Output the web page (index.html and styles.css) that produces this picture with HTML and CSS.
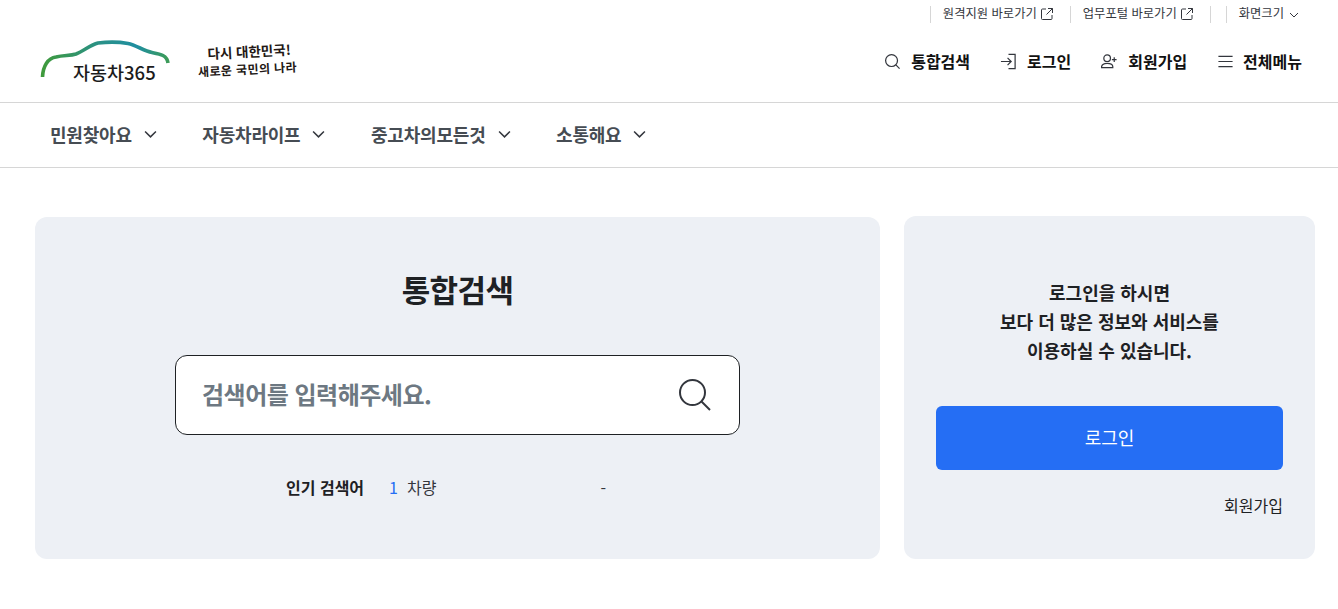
FILE: index.html
```html
<!DOCTYPE html>
<html lang="ko">
<head>
<meta charset="utf-8">
<title>자동차365</title>
<link rel="stylesheet" href="styles.css">
</head>
<body>
<header class="header">
  <div class="util">
    <a class="util-link"><span>원격지원 바로가기</span><svg class="ext" viewBox="0 0 14 14"><path d="M6 2H2.500A1 1 0 0 0 1.500 3v8.500a1 1 0 0 0 1 1H11a1 1 0 0 0 1-1V8M8 1.500h4.500V6M12.500 1.500L6.500 7.500"/></svg></a>
    <a class="util-link"><span>업무포털 바로가기</span><svg class="ext" viewBox="0 0 14 14"><path d="M6 2H2.500A1 1 0 0 0 1.500 3v8.500a1 1 0 0 0 1 1H11a1 1 0 0 0 1-1V8M8 1.500h4.500V6M12.500 1.500L6.500 7.500"/></svg></a>
    <span class="util-empty"></span>
    <a class="util-size"><span>화면크기</span><svg class="util-chev" viewBox="0 0 10 6"><path d="M1 1l4 4 4-4"/></svg></a>
  </div>
  <div class="brand-row">
    <div class="brand">
      <div class="logo">
        <svg class="logo-car" viewBox="0 0 130 46">
          <defs><linearGradient id="car" x1="0" x2="1" y1="0" y2="0"><stop offset="0" stop-color="#3f9a3c"/><stop offset=".45" stop-color="#2a9187"/><stop offset=".75" stop-color="#1f8ea0"/><stop offset="1" stop-color="#3c9b58"/></linearGradient></defs>
          <path d="M2.500 43C3 32 8 24 16 23C24 21 30 22 36 20C44 17 50 11 58 9C66 8 80 8 88 9.500C96 11 104 17 112 18.500C120 20 127 21 128 29" fill="none" stroke="url(#car)" stroke-width="3.600"/>
        </svg>
        <span class="logo-text">자동차365</span>
      </div>
      <div class="slogan"><span class="slogan-a">다시 대한민국!</span><span class="slogan-b">새로운 국민의 나라</span></div>
    </div>
    <nav class="quick">
      <a class="quick-item"><svg class="qi" viewBox="0 0 18 18"><circle cx="8" cy="8" r="6.300"/><path d="M12.600 12.600L16.500 16.500"/></svg>통합검색</a>
      <a class="quick-item"><svg class="qi" viewBox="0 0 18 18"><path d="M1 9h10.500M8 5.200L11.800 9 8 12.800M9 1.500h7v15H9"/></svg>로그인</a>
      <a class="quick-item"><svg class="qi" viewBox="0 0 18 18"><circle cx="6.500" cy="5.500" r="3.500"/><path d="M.500 15.500c0-3 2.500-4.500 6-4.500s6 1.500 6 3.500v1zM14 4.500v5M11.500 7h5"/></svg>회원가입</a>
      <a class="quick-item"><svg class="qi" viewBox="0 0 18 18"><path d="M1.500 3.500h15M1.500 9h15M1.500 14.500h15"/></svg>전체메뉴</a>
    </nav>
  </div>
</header>
<nav class="gnb">
  <a class="gnb-item">민원찾아요<svg class="gnb-chev" viewBox="0 0 12 8"><path d="M1 1.200l5 5 5-5"/></svg></a>
  <a class="gnb-item">자동차라이프<svg class="gnb-chev" viewBox="0 0 12 8"><path d="M1 1.200l5 5 5-5"/></svg></a>
  <a class="gnb-item">중고차의모든것<svg class="gnb-chev" viewBox="0 0 12 8"><path d="M1 1.200l5 5 5-5"/></svg></a>
  <a class="gnb-item">소통해요<svg class="gnb-chev" viewBox="0 0 12 8"><path d="M1 1.200l5 5 5-5"/></svg></a>
</nav>
<main class="main">
  <section class="card search-card">
    <h1 class="search-title">통합검색</h1>
    <div class="search-box">
      <span class="search-ph">검색어를 입력해주세요.</span>
      <svg class="search-icon" viewBox="0 0 32 32"><circle cx="13.500" cy="13.500" r="12.500"/><path d="M22.500 22.500L31 31"/></svg>
    </div>
    <div class="popular">
      <strong class="popular-label">인기 검색어</strong>
      <span class="popular-num">1</span>
      <span class="popular-word">차량</span>
      <span class="popular-dash">-</span>
    </div>
  </section>
  <aside class="card login-card">
    <p class="login-text">로그인을 하시면<br>보다 더 많은 정보와 서비스를<br>이용하실 수 있습니다.</p>
    <a class="login-btn">로그인</a>
    <a class="join-link">회원가입</a>
  </aside>
</main>
</body>
</html>
```
FILE: styles.css
```css
* { box-sizing: border-box; }
html, body { margin: 0; padding: 0; }
body {
  background: #fff;
  color: #1e2124;
  font-family: "Noto Sans CJK KR", "Noto Sans", sans-serif;
  overflow: hidden;
}
.header { height: 103px; border-bottom: 1px solid #d6d6d6; }
.util {
  display: flex;
  justify-content: flex-end;
  align-items: center;
  height: 28px;
  padding: 0 39px 0 0;
  font-size: 12.300px;
  color: #33363d;
}
.util-link {
  display: flex;
  align-items: flex-start;
  gap: 3px;
  height: 17px;
  padding: 0 0 0 12px;
  margin-right: 16px;
  border-left: 1px solid #d6d6d6;
  line-height: 15px;
}
.ext { width: 14px; height: 14px; margin-top: 1px; fill: none; stroke: #33363d; stroke-width: 1; }
.util-empty { width: 1px; height: 17px; background: #d6d6d6; margin-right: 15px; }
.util-size {
  display: flex;
  align-items: flex-start;
  gap: 5px;
  height: 17px;
  padding-left: 12px;
  border-left: 1px solid #d6d6d6;
  line-height: 15px;
}
.util-chev { width: 10px; height: 6px; margin-top: 6px; fill: none; stroke: #33363d; stroke-width: 1; }
.brand-row {
  display: flex;
  justify-content: space-between;
  align-items: center;
  height: 66px;
  padding: 0 36px 0 40px;
}
.brand { display: flex; align-items: center; gap: 27px; }
.logo { position: relative; width: 130px; height: 42px; }
.logo-car { display: block; width: 130px; height: 46px; position: absolute; left: 0; top: -6px; }
.logo-text {
  position: absolute;
  left: 33px;
  top: 19px;
  font-size: 18.500px;
  line-height: 26px;
  font-weight: 500;
  color: #1c1c1c;
  white-space: nowrap;
}
.slogan {
  display: flex;
  flex-direction: column;
  align-items: center;
  width: 100px;
  margin-top: -2px;
  transform: rotate(-3deg);
  color: #231815;
  font-weight: 700;
  line-height: 17px;
}
.slogan-a { padding-left: 5px; font-size: 13.500px; white-space: nowrap; }
.slogan-b { font-size: 12px; letter-spacing: .4px; white-space: nowrap; }
.quick { display: flex; gap: 30px; align-items: center; }
.quick-item {
  display: flex;
  align-items: center;
  gap: 10px;
  font-size: 16px;
  font-weight: 700;
  line-height: 22px;
  color: #111;
}
.quick-item:last-child { gap: 9px; }
.qi { width: 17px; height: 17px; fill: none; stroke: #33363d; stroke-width: 1.300; }
.gnb {
  display: flex;
  align-items: center;
  gap: 45.500px;
  height: 65px;
  padding: 0 0 2px 50px;
  border-bottom: 1px solid #d6d6d6;
}
.gnb-item {
  display: flex;
  align-items: center;
  gap: 12px;
  font-size: 18px;
  font-weight: 700;
  line-height: 26px;
  letter-spacing: -.200px;
  color: #464c53;
}
.gnb-chev { width: 13px; height: 9px; fill: none; stroke: #33363d; stroke-width: 1.400; }
.main {
  display: flex;
  gap: 24px;
  padding: 49px 23px 0 35px;
}
.card { background: #edf0f5; border-radius: 12px; height: 342px; }
.search-card {
  flex: 0 0 845px;
  display: flex;
  flex-direction: column;
  align-items: center;
  padding-top: 49px;
}
.search-title {
  margin: 0;
  font-size: 31px;
  line-height: 46px;
  font-weight: 700;
  letter-spacing: -.600px;
  color: #1e2124;
}
.search-box {
  display: flex;
  align-items: center;
  justify-content: space-between;
  width: 565px;
  height: 80px;
  margin-top: 43px;
  padding: 0 28px 4px 26px;
  background: #fff;
  border: 1px solid #1e2124;
  border-radius: 12px;
}
.search-ph { font-size: 24px; font-weight: 700; color: #6d7882; letter-spacing: -.500px; }
.search-icon { width: 32px; height: 32px; margin-top: 4px; fill: none; stroke: #33363d; stroke-width: 2; }
.popular {
  display: flex;
  align-items: center;
  width: 343px;
  height: 24px;
  margin-top: 40px;
  padding-right: 23px;
  font-size: 16px;
  line-height: 24px;
  color: #33363d;
}
.popular-label { font-weight: 700; color: #1e2124; margin-right: 25px; }
.popular-num { color: #256ef4; margin-right: 9px; }
.popular-word { flex: 1; }
.popular-dash { font-size: 16px; margin-top: 2px; }
.login-card {
  flex: 1;
  margin-top: -1px;
  height: 343px;
  display: flex;
  flex-direction: column;
  padding: 62px 32px 0;
}
.login-text {
  margin: 0;
  text-align: center;
  font-size: 18px;
  font-weight: 700;
  line-height: 28.800px;
  color: #1e2124;
}
.login-btn {
  display: flex;
  align-items: center;
  justify-content: center;
  height: 64px;
  margin-top: 41.600px;
  padding-bottom: 2px;
  background: #256ef4;
  border-radius: 6px;
  color: #fff;
  font-size: 18px;
  font-weight: 400;
}
.join-link {
  align-self: flex-end;
  margin-top: 23px;
  font-size: 16px;
  line-height: 24px;
  color: #1e2124;
}
```
